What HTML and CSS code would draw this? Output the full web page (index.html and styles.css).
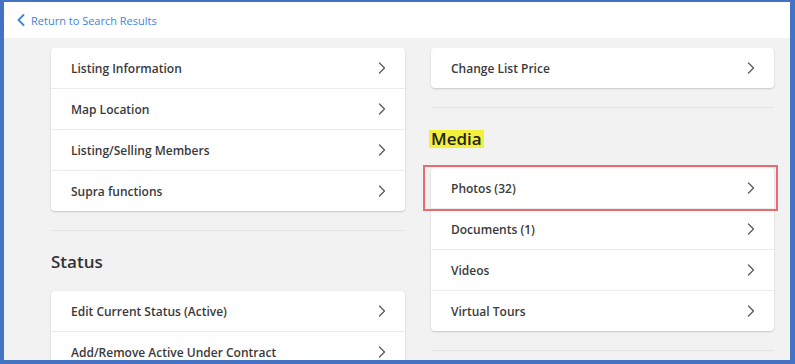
FILE: index.html
```html
<!DOCTYPE html>
<html lang="en">
<head>
    <meta charset="UTF-8">
    <title>Listing Actions</title>
    <link rel="stylesheet" href="styles.css">
</head>
<body>
    <div class="frame">
        <header class="topbar">
            <a class="back-link" href="#">
                <svg width="8" height="12" viewBox="0 0 8 12"><path d="M6.5 1 L1.5 6 L6.5 11" fill="none" stroke="#3d85d8" stroke-width="1.8" stroke-linecap="round" stroke-linejoin="round"/></svg>
                <span>Return to Search Results</span>
            </a>
        </header>

        <div class="content">
            <div class="column">
                <div class="card">
                    <a class="row" href="#"><span>Listing Information</span><svg class="chev" width="8" height="12" viewBox="0 0 8 12"><path d="M1.5 1 L6.5 6 L1.5 11"/></svg></a>
                    <a class="row" href="#"><span>Map Location</span><svg class="chev" width="8" height="12" viewBox="0 0 8 12"><path d="M1.5 1 L6.5 6 L1.5 11"/></svg></a>
                    <a class="row" href="#"><span>Listing/Selling Members</span><svg class="chev" width="8" height="12" viewBox="0 0 8 12"><path d="M1.5 1 L6.5 6 L1.5 11"/></svg></a>
                    <a class="row" href="#"><span>Supra functions</span><svg class="chev" width="8" height="12" viewBox="0 0 8 12"><path d="M1.5 1 L6.5 6 L1.5 11"/></svg></a>
                </div>
                <hr class="divider">
                <h2 class="section-title">Status</h2>
                <div class="card">
                    <a class="row" href="#"><span>Edit Current Status (Active)</span><svg class="chev" width="8" height="12" viewBox="0 0 8 12"><path d="M1.5 1 L6.5 6 L1.5 11"/></svg></a>
                    <a class="row" href="#"><span>Add/Remove Active Under Contract</span><svg class="chev" width="8" height="12" viewBox="0 0 8 12"><path d="M1.5 1 L6.5 6 L1.5 11"/></svg></a>
                </div>
            </div>

            <div class="column">
                <div class="card">
                    <a class="row" href="#"><span>Change List Price</span><svg class="chev" width="8" height="12" viewBox="0 0 8 12"><path d="M1.5 1 L6.5 6 L1.5 11"/></svg></a>
                </div>
                <hr class="divider">
                <h2 class="section-title"><span class="highlight">Media</span></h2>
                <div class="card">
                    <a class="row marked" href="#"><span>Photos (32)</span><svg class="chev" width="8" height="12" viewBox="0 0 8 12"><path d="M1.5 1 L6.5 6 L1.5 11"/></svg></a>
                    <a class="row" href="#"><span>Documents (1)</span><svg class="chev" width="8" height="12" viewBox="0 0 8 12"><path d="M1.5 1 L6.5 6 L1.5 11"/></svg></a>
                    <a class="row" href="#"><span>Videos</span><svg class="chev" width="8" height="12" viewBox="0 0 8 12"><path d="M1.5 1 L6.5 6 L1.5 11"/></svg></a>
                    <a class="row" href="#"><span>Virtual Tours</span><svg class="chev" width="8" height="12" viewBox="0 0 8 12"><path d="M1.5 1 L6.5 6 L1.5 11"/></svg></a>
                </div>
                <hr class="divider">
            </div>
        </div>
    </div>
</body>
</html>
```

FILE: styles.css
```css
body {
    margin: 0;
    font-family: "Open Sans", "Noto Sans", sans-serif;
    background-color: #ffffff;
}

.frame {
    height: 364px;
    box-sizing: border-box;
    border-style: solid;
    border-color: #4472c4;
    border-width: 2px 5px 4px 4px;
    background-color: #f2f2f2;
    overflow: hidden;
}

.topbar {
    height: 36px;
    background-color: #ffffff;
    display: flex;
    align-items: center;
    padding-left: 13px;
}

.back-link {
    display: flex;
    align-items: center;
    gap: 6px;
    color: #3d85d8;
    font-size: 11px;
    text-decoration: none;
}

.content {
    display: grid;
    grid-template-columns: 354px 343px;
    column-gap: 26px;
    padding: 10px 0 0 47px;
}

.card {
    background-color: #ffffff;
    border-radius: 4px;
    box-shadow: 0 1px 2px rgba(0, 0, 0, 0.18);
}

.row {
    height: 40px;
    display: flex;
    align-items: center;
    justify-content: space-between;
    padding: 0 19px 0 20px;
    color: #3a3a3a;
    font-size: 12px;
    font-weight: 600;
    text-decoration: none;
    position: relative;
}

.row + .row {
    border-top: 1px solid #ececec;
}

.chev path {
    fill: none;
    stroke: #5a5a5a;
    stroke-width: 1.3;
    stroke-linecap: round;
    stroke-linejoin: round;
}

/* red annotation box round the Photos row */
.marked::after {
    content: "";
    position: absolute;
    top: -3px;
    bottom: -3px;
    left: -8px;
    right: -4px;
    border: 2px solid #ea6a70;
}

.divider {
    border: none;
    border-top: 1px solid #e2e2e2;
    margin: 19px 0 0 0;
}

.section-title {
    margin: 19px 0 17px 0;
    line-height: 24px;
    font-size: 17px;
    font-weight: 600;
    color: #333333;
}

.highlight {
    display: inline-block;
    line-height: 18px;
    padding: 0 2px;
    margin-left: -2px;
    background-color: #f4ef3a;
    color: #222222;
}
```
